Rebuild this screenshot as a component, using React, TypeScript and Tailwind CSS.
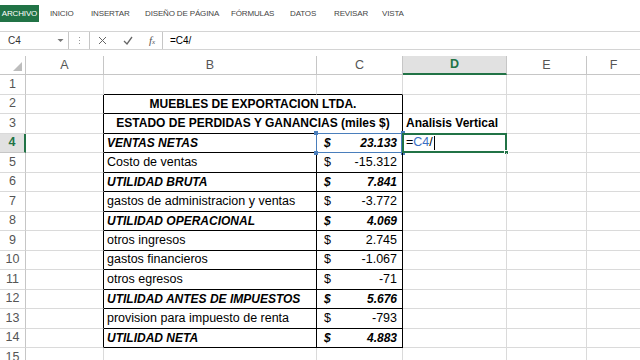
import React from 'react';

type Row = { label: string; value: string; strong?: boolean };

const rows: Row[] = [
  { label: 'VENTAS NETAS', value: '23.133', strong: true },
  { label: 'Costo de ventas', value: '-15.312' },
  { label: 'UTILIDAD BRUTA', value: '7.841', strong: true },
  { label: 'gastos de administracion y ventas', value: '-3.772' },
  { label: 'UTILIDAD OPERACIONAL', value: '4.069', strong: true },
  { label: 'otros ingresos', value: '2.745' },
  { label: 'gastos financieros', value: '-1.067' },
  { label: 'otros egresos', value: '-71' },
  { label: 'UTILIDAD ANTES DE IMPUESTOS', value: '5.676', strong: true },
  { label: 'provision para impuesto de renta', value: '-793' },
  { label: 'UTILIDAD NETA', value: '4.883', strong: true },
];

// tab label + slot width (start of this tab to start of next)
const tabs: [string, string][] = [
  ['INICIO', 'w-[41px]'],
  ['INSERTAR', 'w-[54px]'],
  ['DISEÑO DE PÁGINA', 'w-[86px]'],
  ['FÓRMULAS', 'w-[59px]'],
  ['DATOS', 'w-[44px]'],
  ['REVISAR', 'w-[48px]'],
  ['VISTA', 'w-[40px]'],
];

const cell = 'h-full border-r border-b border-[#dadada] shrink-0';

function RowHead({ n, active }: { n: number; active?: boolean }) {
  return (
    <div
      className={
        'w-[26px] h-full shrink-0 flex items-center justify-center text-[12.5px] border-b ' +
        (active
          ? 'bg-[#e1e1e1] text-[#217346] font-bold border-r-2 border-r-[#217346] border-b-[#c6c6c6]'
          : 'text-[#555] border-r border-r-[#c6c6c6] border-b-[#dadada]')
      }
    >
      {n}
    </div>
  );
}

function Tail() {
  return (
    <>
      <div className={cell + ' w-[80px]'} />
      <div className="h-full flex-1 border-b border-[#dadada]" />
    </>
  );
}

export default function App() {
  return (
    <div className="w-[640px] h-[360px] overflow-hidden bg-white text-black font-['Liberation_Sans',sans-serif]">
      {/* ribbon tabs */}
      <div className="h-[5px]" />
      <div className="h-[17px] flex items-center text-[8px] text-[#444] tracking-[-0.15px]">
        <div className="h-full w-[39px] shrink-0 bg-[#217346] text-white flex items-center justify-center">ARCHIVO</div>
        <div className="flex ml-[11px]">
          {tabs.map(([t, w]) => (
            <span key={t} className={w + ' shrink-0 whitespace-nowrap'}>
              {t}
            </span>
          ))}
        </div>
      </div>
      <div className="h-[9px]" />

      {/* formula bar */}
      <div className="h-[19px] flex items-stretch border-y border-[#d4d4d4] text-[10px] text-[#333]">
        <div className="w-[69px] flex items-center justify-between pl-[8px] pr-[4px] border-r border-[#c6c6c6]">
          <span>C4</span>
          <svg width="7" height="5" viewBox="0 0 7 5">
            <path d="M0.5 1 L3.5 4 L6.5 1 Z" fill="#777" />
          </svg>
        </div>
        <div className="w-[20px] flex flex-col items-center justify-center gap-[2px]">
          <span className="w-[1px] h-[1px] bg-[#999]" />
          <span className="w-[1px] h-[1px] bg-[#999]" />
          <span className="w-[1px] h-[1px] bg-[#999]" />
        </div>
        <div className="w-[74px] flex items-center gap-[16px] pl-[8px] border-x border-[#c6c6c6]">
          <svg width="9" height="9" viewBox="0 0 9 9">
            <path d="M1 1 L8 8 M8 1 L1 8" stroke="#666" strokeWidth="1" />
          </svg>
          <svg width="10" height="9" viewBox="0 0 10 9">
            <path d="M1 5 L4 8 L9 1" stroke="#666" strokeWidth="1.3" fill="none" />
          </svg>
          <span className="italic font-['Liberation_Serif',serif] text-[11px] text-[#555]">
            f<span className="text-[7px]">x</span>
          </span>
        </div>
        <div className="flex-1 flex items-center pl-[7px] text-[10px] text-black">=C4/</div>
      </div>
      <div className="h-[6px]" />

      {/* column headers */}
      <div className="h-[19px] flex text-[12.5px] text-[#555]">
        <div className="w-[26px] h-full shrink-0 border-r border-b border-[#c6c6c6] relative">
          <svg className="absolute right-[3px] bottom-[3px]" width="9" height="9" viewBox="0 0 9 9">
            <path d="M9 0 L9 9 L0 9 Z" fill="#bdbdbd" />
          </svg>
        </div>
        <div className="w-[78px] h-full shrink-0 flex items-center justify-center border-r border-b border-[#c6c6c6]">A</div>
        <div className="w-[213px] h-full shrink-0 flex items-center justify-center border-r border-b border-[#c6c6c6]">B</div>
        <div className="w-[86px] h-full shrink-0 flex items-center justify-center border-r border-b border-[#c6c6c6]">C</div>
        <div className="w-[104px] h-full shrink-0 flex items-center justify-center bg-[#e1e1e1] text-[#217346] font-bold border-r border-[#c6c6c6] border-b-2 border-b-[#217346]">D</div>
        <div className="w-[80px] h-full shrink-0 flex items-center justify-center border-r border-b border-[#c6c6c6]">E</div>
        <div className="flex-1 h-full flex items-center justify-center border-b border-[#c6c6c6]">F</div>
      </div>

      {/* row 1 */}
      <div className="h-[19.5px] flex">
        <RowHead n={1} />
        <div className={cell + ' w-[78px]'} />
        <div className="h-full w-[213px] shrink-0 border-r border-[#dadada] border-b border-b-black" />
        <div className="h-full w-[86px] shrink-0 border-r border-[#dadada] border-b border-b-black" />
        <div className={cell + ' w-[104px]'} />
        <Tail />
      </div>

      {/* row 2 */}
      <div className="h-[19.5px] flex text-[12px]">
        <RowHead n={2} />
        <div className="h-full w-[78px] shrink-0 border-b border-[#dadada] border-r border-r-black" />
        <div className="h-full w-[299px] shrink-0 border-r border-b border-black flex items-center justify-center font-bold">
          MUEBLES DE EXPORTACION LTDA.
        </div>
        <div className={cell + ' w-[104px]'} />
        <Tail />
      </div>

      {/* row 3 */}
      <div className="h-[19.5px] flex text-[12px]">
        <RowHead n={3} />
        <div className="h-full w-[78px] shrink-0 border-b border-[#dadada] border-r border-r-black" />
        <div className="h-full w-[299px] shrink-0 border-r border-b border-black flex items-center justify-center font-bold whitespace-nowrap">
          ESTADO DE PERDIDAS Y GANANCIAS (miles $)
        </div>
        <div className={cell + ' w-[104px] flex items-center pl-[3px] font-bold whitespace-nowrap'}>Analisis Vertical</div>
        <Tail />
      </div>

      {/* rows 4-14 */}
      {rows.map((r, i) => {
        const n = i + 4;
        const first = i === 0;
        const st = r.strong ? 'font-bold italic text-[12px]' : 'text-[12.5px]';
        return (
          <div key={n} className="h-[19.5px] flex">
            <RowHead n={n} active={first} />
            <div className="h-full w-[78px] shrink-0 border-b border-[#dadada] border-r border-r-black" />
            <div className={'h-full w-[213px] shrink-0 border-r border-b border-black flex items-center pl-[3px] whitespace-nowrap ' + st}>
              {r.label}
            </div>
            <div className={'relative h-full w-[86px] shrink-0 border-r border-b border-black flex items-center justify-between pl-[7px] pr-[5px] ' + st}>
              <span>$</span>
              <span>{r.value}</span>
              {first && (
                <>
                  <div className="absolute -left-[1px] -top-[1px] w-[86px] h-[20.5px] border border-[#4a7ebb] pointer-events-none" />
                  <div className="absolute -left-[3px] -top-[3px] w-[4px] h-[4px] bg-[#4a7ebb]" />
                  <div className="absolute -right-[3px] -top-[3px] w-[4px] h-[4px] bg-[#4a7ebb]" />
                  <div className="absolute -left-[3px] -bottom-[3px] w-[4px] h-[4px] bg-[#4a7ebb]" />
                  <div className="absolute -right-[3px] -bottom-[3px] w-[4px] h-[4px] bg-[#4a7ebb]" />
                </>
              )}
            </div>
            <div className={'relative ' + cell + ' w-[104px] flex items-center pl-[3px] text-[12.5px]'}>
              {first && (
                <>
                  <span>
                    =<span className="text-[#3a6fc4]">C4</span>/
                  </span>
                  <span className="w-[1px] h-[14px] bg-black ml-[1px]" />
                  <div className="absolute -left-[1px] -top-[1px] w-[105px] h-[20.5px] border-2 border-[#217346] pointer-events-none" />
                  <div className="absolute -right-[3px] -bottom-[3px] w-[5px] h-[5px] bg-[#217346] border border-white" />
                </>
              )}
            </div>
            <Tail />
          </div>
        );
      })}

      {/* row 15 */}
      <div className="h-[19.5px] flex">
        <RowHead n={15} />
        <div className={cell + ' w-[78px]'} />
        <div className={cell + ' w-[213px]'} />
        <div className={cell + ' w-[86px]'} />
        <div className={cell + ' w-[104px]'} />
        <Tail />
      </div>
    </div>
  );
}
